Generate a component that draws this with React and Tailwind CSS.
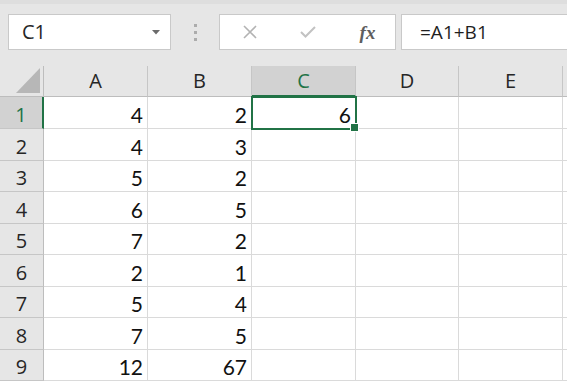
import React from "react";

const columns = [
  { label: "A", w: "w-[104px]" },
  { label: "B", w: "w-[104px]" },
  { label: "C", w: "w-[104px]" },
  { label: "D", w: "w-[103px]" },
  { label: "E", w: "w-[104px]" },
  { label: "", w: "w-[40px]" },
];

const rowHeights = [
  "h-[32px]",
  "h-[32px]",
  "h-[31px]",
  "h-[32px]",
  "h-[31px]",
  "h-[32px]",
  "h-[31px]",
  "h-[32px]",
  "h-[31px]",
];

const data = [
  [4, 2, 6],
  [4, 3],
  [5, 2],
  [6, 5],
  [7, 2],
  [2, 1],
  [5, 4],
  [7, 5],
  [12, 67],
];

function FormulaBar() {
  return (
    <div className="h-[66px] bg-[#e6e6e6] border-t-[4px] border-[#dedede] flex items-start pt-[10px] pl-[8px]">
      <div className="w-[163px] h-[36px] bg-white border border-[#c9c9c9] flex items-center justify-between pl-[13px] pr-[10px]">
        <span className="text-[20px] leading-none text-[#262626] font-['Open_Sans',sans-serif]">C1</span>
        <svg width="8" height="5" viewBox="0 0 8 5">
          <polygon points="0,0 8,0 4,4.5" fill="#6b6b6b" />
        </svg>
      </div>
      <div className="w-[48px] h-[36px] flex flex-col items-center justify-center gap-[4px]">
        <div className="w-[3px] h-[3px] bg-[#acacac]" />
        <div className="w-[3px] h-[3px] bg-[#acacac]" />
        <div className="w-[3px] h-[3px] bg-[#acacac]" />
      </div>
      <div className="w-[177px] h-[36px] bg-white border border-[#c9c9c9] flex items-center">
        <div className="w-[58px] flex justify-center pl-[2px]">
          <svg width="14" height="14" viewBox="0 0 14 14">
            <path d="M1 1 L13 13 M13 1 L1 13" stroke="#b3b3b3" strokeWidth="1.6" fill="none" />
          </svg>
        </div>
        <div className="w-[60px] flex justify-center">
          <svg width="16" height="12" viewBox="0 0 16 12">
            <path d="M1 6 L5.5 10.5 L15 1" stroke="#c2c2c2" strokeWidth="2" fill="none" />
          </svg>
        </div>
        <div className="flex-1 flex justify-center pl-[2px]">
          <span className="text-[19px] leading-none italic font-semibold text-[#5e5e5e] font-['Liberation_Serif',serif]">
            fx
          </span>
        </div>
      </div>
      <div className="ml-[5px] flex-1 h-[36px] bg-white border border-r-0 border-[#c9c9c9] flex items-center pl-[18px]">
        <span className="text-[19px] leading-none text-[#1f1f1f] font-['Open_Sans',sans-serif]">=A1+B1</span>
      </div>
    </div>
  );
}

function HeaderRow() {
  return (
    <div className="flex h-[31px] bg-[#e6e6e6]">
      <div className="w-[44px] shrink-0 border-r border-b border-[#bdbdbd] flex items-end justify-end pr-[3px] pb-[3px]">
        <svg width="24" height="25" viewBox="0 0 24 25">
          <polygon points="24,0 24,25 0,25" fill="#b7b7b7" />
        </svg>
      </div>
      {columns.map((c, i) => (
        <div
          key={i}
          className={`${c.w} shrink-0 flex items-center justify-center text-[20px] leading-none font-['Open_Sans',sans-serif] ${
            c.label === "C"
              ? "bg-[#d2d2d2] text-[#217346] border-r border-[#c6c6c6] border-b-2 border-b-[#217346]"
              : "text-[#262626] border-r border-b border-[#c6c6c6] border-b-[#bdbdbd]"
          }`}
        >
          {c.label}
        </div>
      ))}
    </div>
  );
}

function Row({ index, values }) {
  const selected = index === 0;
  return (
    <div className={`flex ${rowHeights[index]}`}>
      <div
        className={`w-[44px] shrink-0 border-b border-[#c6c6c6] flex items-center justify-center pt-[4px] text-[20px] leading-none font-['Open_Sans',sans-serif] ${
          selected
            ? "bg-[#d2d2d2] text-[#217346] border-r-2 border-r-[#217346]"
            : "bg-[#e6e6e6] text-[#262626] border-r border-r-[#bdbdbd]"
        }`}
      >
        {index + 1}
      </div>
      {columns.map((c, i) => (
        <div
          key={i}
          className={`${c.w} shrink-0 border-r border-b border-[#dadada] flex items-end justify-end pr-[4px] pb-[3px] text-[21px] leading-none text-[#111] font-['Lato',sans-serif]`}
        >
          {values[i] ?? ""}
        </div>
      ))}
    </div>
  );
}

export default function App() {
  return (
    <div className="w-[567px] h-[383px] overflow-hidden bg-white">
      <FormulaBar />
      <div className="relative">
        <HeaderRow />
        {data.map((values, i) => (
          <Row key={i} index={i} values={values} />
        ))}
        <div className="absolute left-[251px] top-[30px] w-[106px] h-[34px] border-2 border-[#217346]" />
        <div className="absolute left-[351px] top-[58px] w-[7px] h-[7px] bg-[#217346] outline outline-1 outline-white" />
      </div>
    </div>
  );
}
